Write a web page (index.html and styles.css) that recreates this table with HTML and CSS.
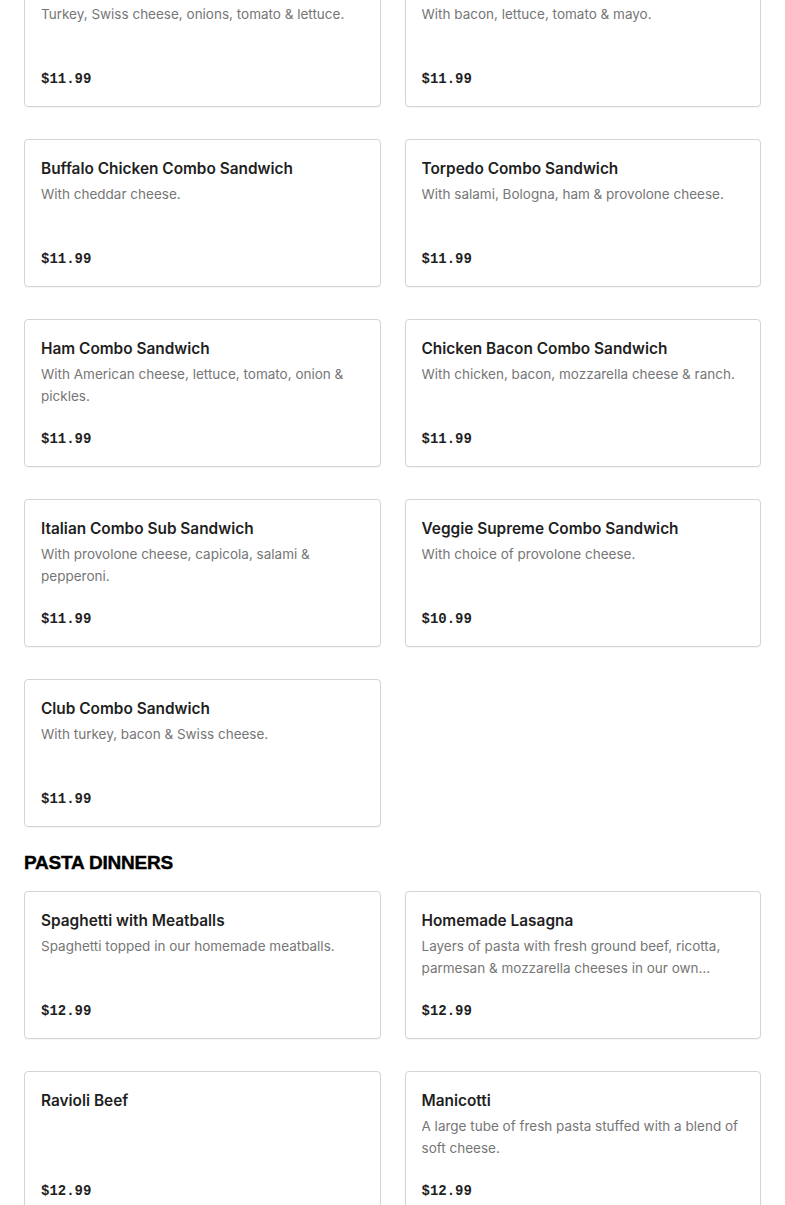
FILE: index.html
```html
<!DOCTYPE html>
<html lang="en">
<head>
<meta charset="utf-8">
<title>Menu</title>
<link rel="stylesheet" href="styles.css">
</head>
<body>
<main class="menu">
  <section class="section section--first">
    <div class="grid">
      <article class="card">
        <h3 class="card-title">Turkey Combo Sandwich</h3>
        <p class="card-desc">Turkey, Swiss cheese, onions, tomato &amp; lettuce.</p>
        <p class="card-price">$11.99</p>
      </article>
      <article class="card">
        <h3 class="card-title">BLT Combo Sandwich</h3>
        <p class="card-desc">With bacon, lettuce, tomato &amp; mayo.</p>
        <p class="card-price">$11.99</p>
      </article>
      <article class="card">
        <h3 class="card-title">Buffalo Chicken Combo Sandwich</h3>
        <p class="card-desc">With cheddar cheese.</p>
        <p class="card-price">$11.99</p>
      </article>
      <article class="card">
        <h3 class="card-title">Torpedo Combo Sandwich</h3>
        <p class="card-desc">With salami, Bologna, ham &amp; provolone cheese.</p>
        <p class="card-price">$11.99</p>
      </article>
      <article class="card">
        <h3 class="card-title">Ham Combo Sandwich</h3>
        <p class="card-desc">With American cheese, lettuce, tomato, onion &amp; pickles.</p>
        <p class="card-price">$11.99</p>
      </article>
      <article class="card">
        <h3 class="card-title">Chicken Bacon Combo Sandwich</h3>
        <p class="card-desc">With chicken, bacon, mozzarella cheese &amp; ranch.</p>
        <p class="card-price">$11.99</p>
      </article>
      <article class="card">
        <h3 class="card-title">Italian Combo Sub Sandwich</h3>
        <p class="card-desc">With provolone cheese, capicola, salami &amp; pepperoni.</p>
        <p class="card-price">$11.99</p>
      </article>
      <article class="card">
        <h3 class="card-title">Veggie Supreme Combo Sandwich</h3>
        <p class="card-desc">With choice of provolone cheese.</p>
        <p class="card-price">$10.99</p>
      </article>
      <article class="card">
        <h3 class="card-title">Club Combo Sandwich</h3>
        <p class="card-desc">With turkey, bacon &amp; Swiss cheese.</p>
        <p class="card-price">$11.99</p>
      </article>
    </div>
  </section>
  <section class="section">
    <h2 class="section-title">PASTA DINNERS</h2>
    <div class="grid">
      <article class="card">
        <h3 class="card-title">Spaghetti with Meatballs</h3>
        <p class="card-desc">Spaghetti topped in our homemade meatballs.</p>
        <p class="card-price">$12.99</p>
      </article>
      <article class="card">
        <h3 class="card-title">Homemade Lasagna</h3>
        <p class="card-desc">Layers of pasta with fresh ground beef, ricotta, parmesan &amp; mozzarella cheeses in our own homemade sauce.</p>
        <p class="card-price">$12.99</p>
      </article>
      <article class="card">
        <h3 class="card-title">Ravioli Beef</h3>
        <p class="card-desc"></p>
        <p class="card-price">$12.99</p>
      </article>
      <article class="card">
        <h3 class="card-title">Manicotti</h3>
        <p class="card-desc">A large tube of fresh pasta stuffed with a blend of soft cheese.</p>
        <p class="card-price">$12.99</p>
      </article>
    </div>
  </section>
</main>
</body>
</html>
```

FILE: styles.css
```css
* { box-sizing: border-box; }
html, body { margin: 0; padding: 0; background: #ffffff; }
body {
  font-family: Inter, "Noto Sans", "Liberation Sans", sans-serif;
  color: #191919;
}
.menu {
  padding: 0 24px;
  margin-top: -41px;
}
.section-title {
  margin: 24px 0 16px;
  font-family: "Liberation Sans", Arial, sans-serif;
  font-weight: 700;
  font-size: 19px;
  line-height: 24px;
  letter-spacing: -0.2px;
  color: #000;
  -webkit-text-stroke: 0.4px #000;
}
.grid {
  display: grid;
  grid-template-columns: 1fr 1fr;
  column-gap: 24px;
  row-gap: 32px;
}
.card {
  display: flex;
  flex-direction: column;
  height: 148px;
  padding: 17px 16px 15px;
  border: 1px solid #d4d4d4;
  border-radius: 4px;
  background: #fff;
  box-shadow: 0 1px 1px rgba(0, 0, 0, 0.04);
}
.card-title {
  margin: 0;
  font-size: 15.4px;
  line-height: 24px;
  font-weight: 600;
  color: #1f1f1f;
  white-space: nowrap;
  overflow: hidden;
  text-overflow: ellipsis;
}
.card-desc {
  margin: 2px 0 0;
  font-size: 13.5px;
  line-height: 22px;
  color: #767676;
  display: -webkit-box;
  -webkit-line-clamp: 2;
  -webkit-box-orient: vertical;
  overflow: hidden;
}
.card-price {
  margin: auto 0 0;
  font-family: "Liberation Mono", "DejaVu Sans Mono", monospace;
  font-weight: 700;
  font-size: 14px;
  line-height: 24px;
  color: #1f1f1f;
}
```
